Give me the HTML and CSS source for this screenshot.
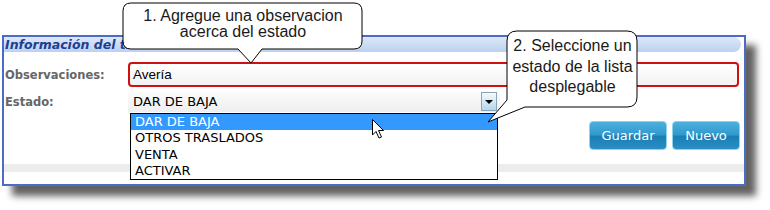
FILE: index.html
```html
<!DOCTYPE html>
<html lang="es">
<head>
<meta charset="utf-8">
<link rel="stylesheet" href="styles.css">
</head>
<body>
<div class="stage">
  <div class="panel">
    <div class="panel-head">Información del traslado</div>
    <div class="row row-obs">
      <div class="label">Observaciones:</div>
      <div class="input">Avería</div>
    </div>
    <div class="row row-estado">
      <div class="label">Estado:</div>
      <div class="select">
        <span class="select-value">DAR DE BAJA</span>
        <span class="select-btn"><span class="tri"></span></span>
        <ul class="options">
          <li class="opt sel">DAR DE BAJA</li>
          <li class="opt">OTROS TRASLADOS</li>
          <li class="opt">VENTA</li>
          <li class="opt">ACTIVAR</li>
        </ul>
      </div>
    </div>
    <div class="actions">
      <button class="btn btn-guardar">Guardar</button>
      <button class="btn btn-nuevo">Nuevo</button>
    </div>
    <div class="strip"></div>
  </div>

  <svg class="callouts" width="770" height="210" viewBox="0 0 770 210">
    <path d="M131,3 H354 Q362,3 362,11 V41 Q362,49 354,49 H262 L251,63 L238,49 H131 Q123,49 123,41 V11 Q123,3 131,3 Z" fill="#fff" stroke="#000" stroke-width="1"/>
    <path d="M517,31 H627 Q637,31 637,41 V97 Q637,107 627,107 H525 L488,122 L507,100 V41 Q507,31 517,31 Z" fill="#fff" stroke="#000" stroke-width="1"/>
    <path d="M372.5,119.5 L372.5,135 L376,131.5 L379,138 L381.5,137 L378.5,130.5 L383.5,130.5 Z" fill="#fff" stroke="#000" stroke-width="1" stroke-linejoin="miter"/>
  </svg>
  <div class="note note-1">1. Agregue una observacion<br>acerca del estado</div>
  <div class="note note-2">2. Seleccione un<br>estado de la lista<br>desplegable</div>
</div>
</body>
</html>
```

FILE: styles.css
```css
html, body {
  margin: 0;
  padding: 0;
  background: #fff;
}

.stage {
  position: relative;
  width: 770px;
  height: 210px;
  padding: 35px 0 0 2px;
  box-sizing: border-box;
  overflow: hidden;
}

.panel {
  position: relative;
  width: 744px;
  height: 151px;
  box-sizing: border-box;
  border: 2px solid #4a6bc6;
  background: #fff;
  box-shadow: 10px 10px 7px rgba(0, 0, 0, 0.62);
  display: flex;
  flex-direction: column;
}

.panel-head {
  height: 15px;
  margin-right: 3px;
  padding-left: 1px;
  border-radius: 0 8px 8px 0;
  background: linear-gradient(#dde8f8, #bcd1ef);
  font-family: "DejaVu Sans", Verdana, sans-serif;
  font-size: 12.5px;
  font-weight: bold;
  font-style: italic;
  line-height: 15px;
  color: #1c3f94;
  white-space: nowrap;
  overflow: hidden;
}

.row {
  display: flex;
  align-items: center;
}

.row-obs {
  margin-top: 10px;
  height: 25px;
}

.row-estado {
  margin-top: 4px;
  height: 21px;
}

.label {
  width: 123px;
  padding-left: 1px;
  font-family: "DejaVu Sans", Verdana, sans-serif;
  font-size: 11.5px;
  font-weight: bold;
  color: #666;
}

.input {
  flex: 0 0 611px;
  height: 25px;
  box-sizing: border-box;
  border: 2px solid #d01010;
  border-radius: 4px;
  background: linear-gradient(#ffffff, #f2f2f2);
  padding-left: 3px;
  font-family: "Liberation Sans", Arial, sans-serif;
  font-size: 13.5px;
  line-height: 21px;
  color: #000;
}

.select {
  position: relative;
  flex: 0 0 372px;
  height: 21px;
  box-sizing: border-box;
  background: linear-gradient(#fbfbfb, #efefef);
  display: flex;
  align-items: center;
  justify-content: space-between;
  padding: 0 3px 0 5px;
}

.select-value {
  font-family: "DejaVu Sans", Verdana, sans-serif;
  font-size: 13px;
  color: #000;
}

.select-btn {
  width: 16px;
  height: 19px;
  box-sizing: border-box;
  border: 1px solid #8aa3b5;
  background: linear-gradient(#f4faff, #b6d6ee);
  display: flex;
  align-items: center;
  justify-content: center;
}

.tri {
  width: 0;
  height: 0;
  border-left: 4px solid transparent;
  border-right: 4px solid transparent;
  border-top: 4px solid #000;
}

.options {
  position: absolute;
  left: 2px;
  top: 22px;
  width: 368px;
  margin: 0;
  padding: 0;
  list-style: none;
  box-sizing: border-box;
  border: 1px solid #000;
  background: #fff;
  z-index: 2;
}

.opt {
  height: 16.25px;
  padding-left: 4px;
  font-family: "DejaVu Sans", Verdana, sans-serif;
  font-size: 13px;
  line-height: 16.25px;
  color: #000;
  white-space: nowrap;
}

.opt.sel {
  background: #3399ff;
  color: #fff;
}

.actions {
  margin-top: 9px;
  margin-right: 4px;
  height: 29px;
  display: flex;
  justify-content: flex-end;
  gap: 5px;
}

.btn {
  height: 29px;
  box-sizing: border-box;
  border: 1px solid #8fd2ec;
  border-radius: 4px;
  background: linear-gradient(#4cb0de 0%, #3099cd 48%, #1b7db5 52%, #2a8fc4 100%);
  color: #fff;
  font-family: "DejaVu Sans", Verdana, sans-serif;
  font-size: 13px;
  padding: 0;
}

.btn-guardar {
  width: 78px;
}

.btn-nuevo {
  width: 68px;
}

.strip {
  margin-top: 14px;
  height: 8px;
  background: #ececec;
}

.callouts {
  position: absolute;
  left: 0;
  top: 0;
  z-index: 5;
  pointer-events: none;
}

.note {
  position: absolute;
  z-index: 6;
  text-align: center;
  font-family: "Liberation Sans", Arial, sans-serif;
  font-size: 16px;
  color: #1a1a1a;
  white-space: nowrap;
}

.note-1 {
  left: 123px;
  top: 8px;
  width: 240px;
  line-height: 16px;
}

.note-2 {
  left: 507px;
  top: 36px;
  width: 131px;
  line-height: 20.5px;
}
```
